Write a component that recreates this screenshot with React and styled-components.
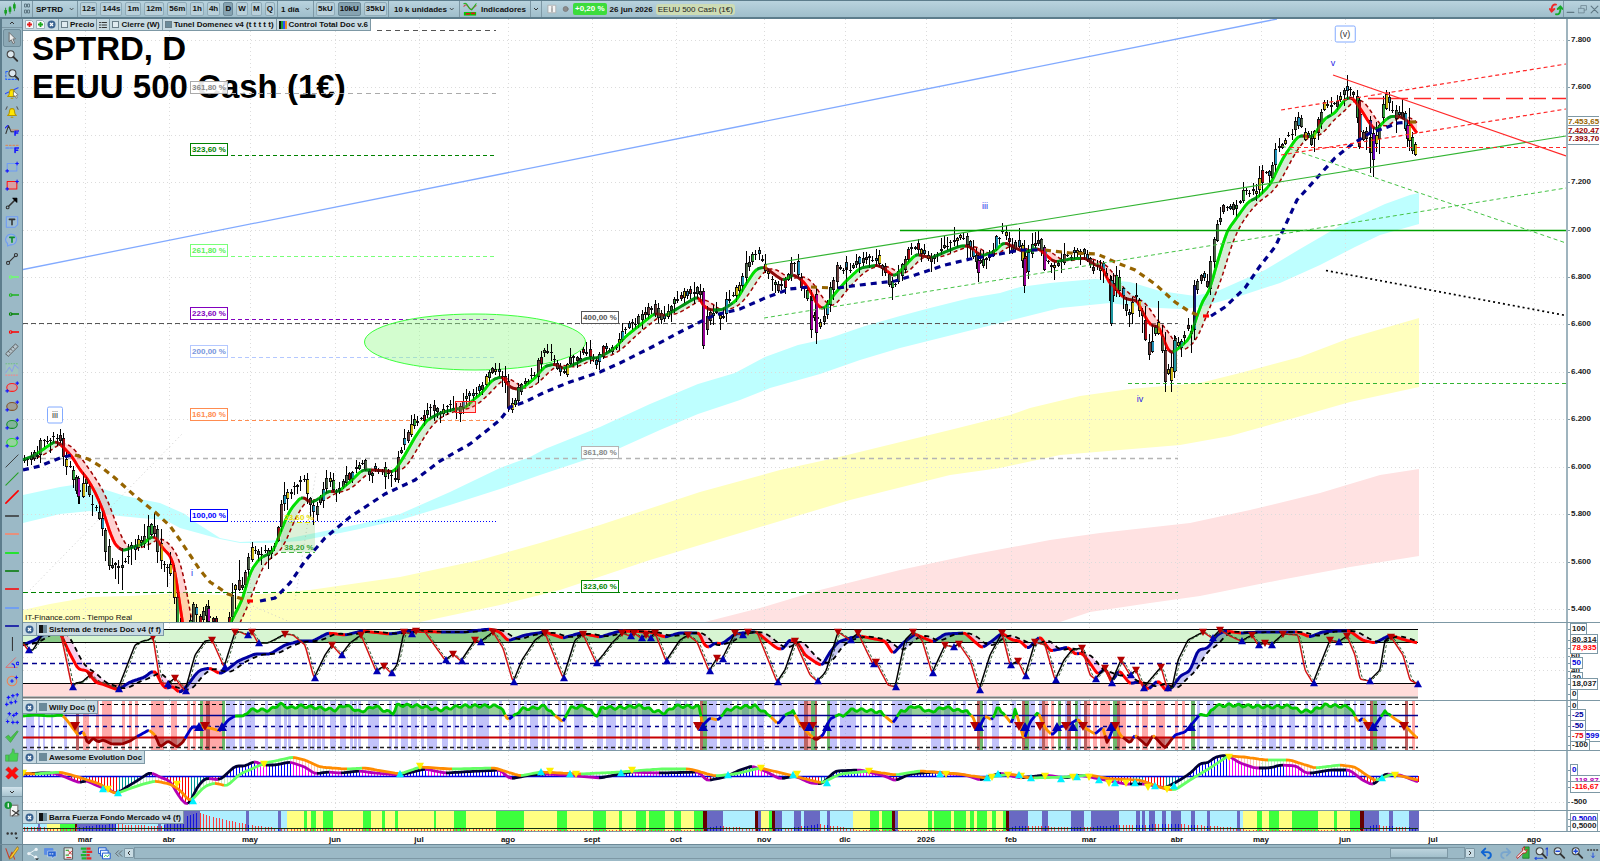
import React from 'react';
import styled, { createGlobalStyle } from 'styled-components';

const GlobalStyle = createGlobalStyle`
  *, *::before, *::after { box-sizing: border-box; }
  body { margin: 0; background: #9bb9c6; font-family: "Liberation Sans", Arial, sans-serif; font-size: 8px; color: #101010; }
  button, select, input { font: inherit; color: inherit; margin: 0; padding: 0; }
  svg { display: block; }
`;

/* ---------- numeric helpers ---------- */

const pts = (s) => s.trim().split(/\s+/).map((p) => p.split(',').map(Number));

const at = (p, x) => {
  if (x <= p[0][0]) return p[0][1];
  for (let i = 1; i < p.length; i += 1) {
    if (x <= p[i][0]) {
      const [x0, y0] = p[i - 1];
      const [x1, y1] = p[i];
      return y0 + ((y1 - y0) * (x - x0)) / (x1 - x0 || 1);
    }
  }
  return p[p.length - 1][1];
};

const resample = (p, spread, step = 3) => {
  const out = [];
  const last = p[p.length - 1][0];
  for (let x = p[0][0]; x <= last; x += step) {
    out.push([x, (at(p, x - spread) + at(p, x) * 2 + at(p, x + spread)) / 4]);
  }
  return out;
};

const lagged = (p, lag) =>
  p.map(([x]) => [x, (at(p, x - lag * 0.4) + at(p, x - lag) + at(p, x - lag * 1.6)) / 3]);

const toPath = (p) => 'M' + p.map(([x, y]) => `${x.toFixed(1)} ${y.toFixed(1)}`).join('L');

const colourRuns = (p, pick) => {
  const runs = [];
  for (let i = 1; i < p.length; i += 1) {
    const colour = pick(p[i - 1], p[i]);
    const last = runs[runs.length - 1];
    if (last && last.colour === colour) last.points.push(p[i]);
    else runs.push({ colour, points: [p[i - 1], p[i]] });
  }
  return runs;
};

const between = (a, b, keep) => {
  let d = '';
  for (let i = 1; i < a.length; i += 1) {
    if (keep(a[i][1], b[i][1])) {
      d += `M${a[i - 1][0]} ${a[i - 1][1].toFixed(1)}L${a[i][0]} ${a[i][1].toFixed(1)}L${b[i][0]} ${b[i][1].toFixed(1)}L${b[i - 1][0]} ${b[i - 1][1].toFixed(1)}Z`;
    }
  }
  return d;
};

const overLevel = (p, level, above) => {
  const clamp = (y) => (above ? Math.min(y, level) : Math.max(y, level));
  return toPath([[p[0][0], level], ...p.map(([x, y]) => [x, clamp(y)]), [p[p.length - 1][0], level]]) + 'Z';
};

const randomiser = (seed) => {
  let s = seed;
  return () => {
    s = (s * 1664525 + 1013904223) % 4294967296;
    return s / 4294967296;
  };
};

/* ---------- series ---------- */

const LEFT = 23;
const PLOT_W = 1543;
const LAST = 1418;
const TOP = 19;
const PRICE_H = 603;

const price = pts(`23,462 30,457 38,453 40,440 48,438 55,436 60,441 63,460 70,468 72,475 78,497 82,480 85,477 88,497 94,508 98,520 102,528 107,558 112,568 117,570 122,562 125,555 130,550 135,540 140,545 145,535 150,523 155,533 160,567 165,565 168,560 172,580 176,620 182,650 190,625 192,606 196,618 200,616 206,612 212,622 222,640 228,622 231,600 233,582 238,584 243,586 247,560 252,548 258,552 264,553 270,550 276,540 280,510 283,497 290,490 297,483 303,480 308,502 313,512 317,505 323,490 328,472 332,490 338,492 343,478 350,476 355,468 362,462 367,475 372,470 378,468 384,473 390,475 394,482 397,455 401,448 407,432 413,423 420,420 427,410 433,407 440,413 447,405 455,412 460,408 465,395 473,396 478,392 483,380 488,375 492,369 498,372 501,380 504,372 506,390 508,408 512,406 517,390 523,387 530,376 535,375 538,358 542,353 546,352 552,358 558,370 563,378 568,357 575,360 580,355 584,350 592,358 596,365 603,348 610,350 617,343 623,328 632,323 642,317 651,305 657,315 662,318 669,310 678,295 698,290 700,292 703,330 706,318 712,313 721,320 726,302 734,292 741,283 745,267 755,252 762,262 769,278 775,287 780,288 784,282 791,265 796,263 798,283 807,297 810,313 816,317 819,328 825,312 830,290 837,267 848,270 859,260 875,257 882,268 891,287 896,280 903,263 910,245 917,247 923,255 930,260 941,247 951,242 960,236 969,245 978,267 984,257 991,253 996,237 1003,233 1012,250 1016,237 1025,270 1029,247 1038,238 1044,260 1053,270 1057,265 1064,257 1079,250 1087,260 1094,270 1101,267 1107,280 1111,305 1114,273 1122,297 1127,313 1136,293 1142,320 1148,350 1151,343 1155,327 1161,343 1166,380 1170,377 1174,343 1179,343 1183,332 1192,327 1194,287 1201,272 1207,290 1212,250 1217,223 1223,207 1233,207 1238,203 1244,190 1257,193 1260,173 1270,175 1275,150 1286,137 1292,133 1297,117 1303,135 1312,143 1318,120 1323,105 1334,107 1342,92 1349,87 1355,100 1358,137 1366,132 1371,158 1375,140 1383,105 1386,99 1394,117 1403,117 1407,133 1414,153 1418,153`);

const average = resample(pts(`23,460 35,455 48,446 55,441 60,444 68,452 73,458 80,470 87,478 95,492 103,510 109,530 115,545 123,551 133,547 143,544 152,536 157,538 162,548 168,553 173,560 178,590 182,622 190,660 215,660 231,622 243,598 250,572 260,558 273,552 282,528 290,510 302,496 311,503 320,498 328,491 338,492 352,480 362,470 372,470 385,471 394,472 405,455 415,437 427,420 440,413 455,409 465,408 473,400 482,393 492,380 503,376 509,387 520,390 535,378 545,366 556,364 563,369 575,364 587,358 597,358 607,353 615,348 625,337 640,325 655,313 665,316 675,310 690,301 699,296 703,306 710,310 722,310 736,301 746,284 756,269 765,267 775,275 784,281 793,274 803,281 811,292 817,305 824,310 832,297 845,282 860,268 878,265 886,270 894,277 905,266 916,254 931,258 945,252 960,246 969,246 981,256 994,252 1004,242 1015,248 1025,252 1038,248 1046,255 1054,262 1070,259 1085,258 1095,265 1103,267 1108,282 1115,287 1122,297 1130,300 1137,300 1144,315 1151,326 1159,326 1165,343 1170,354 1179,348 1190,338 1198,313 1203,300 1209,292 1218,260 1227,231 1238,216 1248,202 1258,197 1270,185 1283,158 1298,136 1305,136 1313,137 1324,119 1335,113 1345,99 1352,97 1360,108 1370,124 1376,131 1385,120 1391,116 1402,117 1410,123 1418,135`), 3, 2);
const averageLag = lagged(average, 9);

const averageColour = ([x0, y0], [x1, y1]) => {
  const slope = (y1 - y0) / (x1 - x0);
  if (slope < -0.65) return '#00e000';
  if (slope < 0.02) return '#009414';
  return slope > 0.8 ? '#ff0000' : '#8c0a0a';
};

const baseline = [
  ['#00008c', '23,470 40,466 60,458 72,455'],
  ['#966400', '75,455 88,459 100,466 115,478 135,496 155,512 170,526 180,540 190,555 200,570 210,582 228,594 245,600'],
  ['#ff0000', '247,601 256,601'],
  ['#00008c', '260,601 275,598 290,583 305,561 325,538 350,517 385,494 400,487 415,480 440,461 470,444 500,420 510,407 525,402 545,392 570,382 600,372 620,363 650,348 680,332 700,322 715,315 740,309 765,298 790,289 808,287'],
  ['#966400', '811,287 833,288'],
  ['#00008c', '838,288 860,285 895,281 915,275 945,265 970,259 1000,254 1020,250 1042,250'],
  ['#966400', '1045,250 1070,253 1097,254 1115,262 1135,270 1155,284 1175,302 1190,312 1200,316'],
  ['#ff0000', '1203,316 1209,316'],
  ['#00008c', '1211,316 1225,307 1245,288 1260,266 1275,247 1285,226 1297,200 1315,180 1335,158 1351,145 1370,133 1385,128 1398,123 1408,122'],
  ['#966400', '1410,122 1418,122'],
];

const bands = [
  ['#ffe2e2', '705,622 760,608 820,590 900,570 970,555 1050,540 1100,533 1190,523 1250,510 1320,493 1380,475 1419,469 1419,556 1350,567 1280,580 1200,596 1150,603 1090,612 1060,622'],
  ['#ffffbe', '23,610 50,604 90,597 130,596 180,593 240,596 310,590 400,577 480,560 540,543 600,525 700,492 780,470 835,458 880,447 950,430 1010,415 1030,408 1080,396 1130,389 1200,383 1240,373 1300,357 1350,338 1419,318 1419,387 1350,402 1280,422 1230,436 1180,445 1120,450 1060,455 1000,468 950,475 850,500 750,530 650,560 560,590 500,605 420,622 23,622'],
  ['#beffff', '23,495 60,487 80,484 100,488 125,496 160,503 185,514 195,522 220,538 240,542 280,540 320,532 360,524 400,514 450,492 500,468 530,457 545,449 600,427 650,404 698,384 735,373 765,357 798,345 830,338 865,326 900,316 930,308 970,298 1000,293 1020,287 1050,283 1095,279 1130,282 1160,291 1195,296 1220,290 1265,270 1300,249 1350,220 1385,204 1410,195 1419,193 1419,224 1380,235 1355,247 1320,265 1280,283 1240,296 1200,307 1180,309 1140,307 1110,303 1060,308 1020,318 960,333 900,348 860,360 820,374 770,388 740,400 698,414 660,430 620,448 585,460 540,475 500,489 450,505 400,520 350,531 300,541 270,543 240,543 220,539 180,528 165,520 140,518 110,515 90,511 60,514 23,523'],
];

const months = [
  [85, 'mar'], [169, 'abr'], [250, 'may'], [335, 'jun'], [419, 'jul'], [508, 'ago'], [592, 'sept'], [676, 'oct'],
  [764, 'nov'], [845, 'dic'], [926, '2026'], [1011, 'feb'], [1089, 'mar'], [1177, 'abr'], [1261, 'may'],
  [1345, 'jun'], [1433, 'jul'], [1534, 'ago'],
];

const priceY = (v) => 229.5 + (7000 - v) * 0.2373;
const priceLevels = [7800, 7600, 7400, 7200, 7000, 6800, 6600, 6400, 6200, 6000, 5800, 5600, 5400];

const fibLeft = [
  [30, '#555', null, '5 4'], [93, '#aaa', '361,80 %', '5 4'], [155, '#008200', '323,60 %', '4 3'],
  [256, '#78ff78', '261,80 %', '4 3'], [319, '#8200be', '223,60 %', '4 3'], [357, '#b4c8ff', '200,00 %', '4 3'],
  [420, '#ff8c50', '161,80 %', '4 3'], [521, '#0000ff', '100,00 %', '1 2'],
];
const fibMid = [
  [323, '#555', '400,00 %'], [458, '#b4b4b4', '361,80 %'], [592, '#008200', '323,60 %'],
];
const fibText = { '#b4c8ff': '#7896dc', '#78ff78': '#5af05a', '#aaa': '#888', '#b4b4b4': '#888' };

const waves = [
  [55, 415, 'iii', true], [192, 573, 'i'], [985, 206, 'iii'], [1140, 399, 'iv'], [1333, 63, 'v'], [1345, 34, '(v)', true],
];

const bigCandles = [
  [78, 478, 497, 476, 504, '#aa00aa'], [208, 608, 622, 600, 622, '#aa00aa'], [703, 291, 346, 288, 349, '#960096'],
  [816, 294, 333, 288, 344, '#960096'], [811, 300, 330, 290, 338, '#960096'], [1024, 258, 286, 240, 293, '#960096'],
  [1044, 247, 270, 245, 271, '#960096'], [978, 260, 273, 255, 282, '#960096'], [1373, 133, 160, 128, 177, '#6400be'],
  [1370, 120, 134, 116, 173, '#1e1e8c'], [1359, 100, 147, 98, 149, '#8c0a14'], [1407, 125, 139, 120, 147, '#aa00aa'],
  [1194, 285, 325, 280, 340, '#14146e'], [1165, 350, 382, 345, 386, '#643c3c'], [1174, 340, 372, 335, 378, '#1e96a0'],
  [1111, 280, 324, 276, 326, '#1e96a0'], [846, 262, 268, 256, 290, '#1e82aa'],
];

const makeCandles = () => {
  const rnd = randomiser(77);
  const out = [];
  const palette = ['#1e8cb4', '#1e8cb4', '#c8b414', '#c8b414', '#a00a14', '#4b5f46', '#4b5f46', '#4b5f46', '#643c3c', '#2d9b37'];
  for (let x = 24; x <= LAST; x += 3.25) {
    const rough = (x > 80 && x < 240) || (x > 1100 && x < 1192) || x > 1358 ? 1.7 : 1;
    const open = at(price, x - 3.25) + (rnd() - 0.5) * 7 * rough;
    const close = at(price, x) + (rnd() - 0.5) * 7 * rough;
    const top = Math.min(open, close);
    const bottom = Math.max(open, close, top + 1);
    out.push({
      x: Math.round(x),
      top,
      bottom,
      high: top - rnd() * rnd() * 13 * rough - 1,
      low: bottom + rnd() * rnd() * 13 * rough + 1,
      colour: palette[Math.floor(rnd() * palette.length)],
    });
  }
  bigCandles.forEach(([x, top, bottom, high, low, colour]) => out.push({ x, top, bottom, high, low, colour }));
  return out;
};
const candles = makeCandles();

/* Sistema de trenes */
const trainSlow = resample(pts(`23,645 35,640 50,630 60,632 68,650 78,669 88,671 95,682 105,685 118,690 130,682 145,677 152,671 157,673 160,682 166,689 172,686 180,693 188,685 195,675 200,670 210,668 220,674 228,669 238,661 255,654 270,654 285,645 300,641 313,641 328,633 345,635 362,631 390,634 410,631 440,632 465,632 490,629 500,632 508,641 525,635 545,632 563,638 580,633 600,637 620,631 650,632 665,637 680,633 700,633 703,643 708,648 715,643 722,644 735,634 750,632 757,632 770,643 778,649 783,649 790,639 798,643 805,655 815,662 822,666 830,652 838,642 850,638 860,636 875,639 885,641 893,654 903,643 915,634 933,642 945,634 965,633 975,642 982,648 992,641 1002,633 1012,640 1020,641 1028,649 1040,636 1050,651 1060,649 1068,647 1075,654 1082,653 1090,663 1098,675 1105,668 1112,682 1119,670 1130,684 1140,681 1148,690 1158,680 1166,691 1172,688 1180,676 1190,671 1198,650 1208,648 1217,635 1225,631 1240,633 1260,632 1280,632 1298,632 1310,637 1322,632 1335,631 1350,631 1362,640 1375,643 1390,635 1405,640 1418,643`), 2, 2);
const trainSlowLag = lagged(trainSlow, 8);
const trainFastKeys = pts(`23,643 28,650 33,650 45,630 60,630 72,687 76,683 82,682 90,675 97,681 105,684 118,689 135,645 143,641 148,640 153,637 160,682 167,684 175,678 185,691 195,655 205,641 212,640 224,667 235,632 240,632 247,635 252,632 258,643 267,643 270,642 285,634 293,635 305,645 314,678 325,655 332,645 341,655 350,643 361,635 376,671 384,666 391,673 397,665 404,632 411,634 416,631 425,632 445,660 453,654 461,661 475,640 480,642 493,632 503,648 513,682 522,660 535,640 545,633 563,678 575,640 583,634 596,663 603,655 612,643 622,633 630,636 634,633 641,638 646,635 650,638 655,633 666,661 680,640 688,635 697,642 709,671 717,658 722,659 735,633 742,635 748,632 757,632 777,682 785,670 795,641 810,675 817,681 823,675 826,671 838,632 850,640 858,633 867,652 873,664 876,662 880,670 888,685 895,687 905,640 913,632 922,640 932,673 945,645 953,647 959,644 970,660 979,690 990,655 1002,633 1010,665 1018,661 1025,676 1035,642 1045,645 1055,680 1064,660 1072,650 1082,648 1090,675 1095,679 1105,668 1111,683 1121,660 1130,675 1136,670 1143,688 1150,680 1161,667 1167,688 1172,688 1178,660 1188,640 1203,632 1212,638 1220,630 1230,636 1241,641 1252,635 1258,645 1265,643 1271,645 1283,634 1298,635 1305,670 1313,683 1320,665 1330,640 1338,642 1347,636 1355,655 1360,679 1369,681 1380,670 1385,640 1391,637 1403,655 1410,680 1418,684`);
const trainFast = resample(trainFastKeys, 1, 1);
const trainFastLag = lagged(trainFast, 2);
const trainMarks = trainFastKeys.slice(1, -1).flatMap(([x, y], i) => {
  const before = trainFastKeys[i][1];
  const after = trainFastKeys[i + 2][1];
  if (y < before && y <= after) return [['down', x, y]];
  if (y > before && y >= after) return [['up', x + 1, y]];
  return [];
}).concat([['up', 1418, 684]]);

/* Willy */
const stripes = {
  'rgba(128,128,245,.48)': '26-34 38-40 43-45 51-53 64-67 226-235 239-242 245-255 265-268 275-281 284-287 288-291 298-304 308-311 312-315 317-321 322-325 330-336 340-346 350-353 354-357 358-361 368-379 389-392 395-398 401-408 411-417 421-424 427-437 442-448 453-456 460-463 467-473 476-489 499-502 509-515 518-521 524-527 530-538 542-545 547-550 558-561 564-567 574-583 597-603 606-616 620-623 626-632 635-638 642-650 662-668 675-681 684-687 690-693 707-717 720-732 737-739 742-749 751-754 757-764 772-775 779-794 798-804 830-837 840-856 860-862 872-875 879-882 892-912 931-941 944-950 953-956 963-966 984-987 992-999 1012-1016 1029-1035 1039-1042 1065-1067 1078-1081 1197-1200 1207-1214 1227-1230 1237-1243 1256-1259 1262-1266 1269-1276 1279-1282 1289-1295 1305-1308 1312-1318 1321-1324 1334-1337 1344-1350 1354-1356 1360-1366 1377-1386',
  'rgba(255,96,96,.55)': '83-89 96-99 102-112 122-125 129-132 135-138 151-164 171-177 187-190 193-196 203-222 808-811 1045-1048 1051-1054 1087-1090 1093-1097 1100-1110 1120-1126 1136-1139 1142-1148 1156-1165 1175-1178 1182-1185 1412-1415',
  'rgba(60,160,60,.75)': '200-203 222-225 703-707 811-815 827-830 980-983 1025-1029 1058-1061 1075-1078 1113-1117 1191-1195 1373-1377',
  'rgba(170,60,60,.8)': '76-79 206-210 700-703 804-808 815-817 977-980 1022-1025 1042-1045 1067-1071 1084-1087 1117-1120 1370-1373 1405-1408',
};
const willyBase = pts(`23,716 35,715 50,716 62,715 66,719 72,727 78,735 83,731 88,744 93,738 98,742 103,740 112,744 122,744 130,741 138,736 149,730 155,735 160,747 168,741 177,747 183,742 187,735 192,727 200,727 210,728 220,731 228,720 235,716 243,716 250,710 258,710 270,710 280,704 290,708 300,706 320,708 335,710 345,705 360,712 375,706 385,711 394,713 397,705 420,706 440,710 460,706 490,706 500,706 508,720 513,716 522,709 535,708 545,706 552,713 563,722 570,708 585,706 597,717 602,707 615,708 640,706 655,711 665,713 675,706 700,707 702,726 710,718 718,720 727,710 740,707 755,706 770,716 778,724 785,715 793,711 800,724 810,735 816,740 823,735 830,719 840,714 843,717 850,710 865,710 880,712 893,723 900,712 915,706 930,712 945,707 960,711 965,710 973,717 978,730 985,716 992,720 998,707 1012,724 1015,708 1024,740 1030,722 1038,712 1045,728 1052,735 1060,727 1070,724 1078,719 1085,728 1095,734 1103,727 1107,744 1115,723 1120,735 1130,743 1135,735 1147,746 1153,735 1165,748 1175,735 1185,732 1192,724 1200,714 1207,716 1215,706 1230,705 1250,706 1270,707 1290,706 1300,711 1312,711 1325,705 1350,707 1358,722 1363,718 1372,730 1385,711 1395,719 1405,725 1410,731 1417,738`);
const willy = resample(willyBase, 1, 2).map(([x, y], i) => [x, y + (x > 240 && y < 713 ? Math.sin(i * 1.3) * 1.4 : 0)]);
const willyColour = ([, y0], [, y1]) => {
  const mid = (y0 + y1) / 2;
  if (mid < 716.2) return '#00c800';
  if (mid > 737) return '#960000';
  return y1 > y0 ? '#ff9600' : '#0000c8';
};
const willyMarks = [
  ...[75, 205, 698, 804, 812, 975, 1019, 1040, 1066, 1083, 1115, 1368, 1404].map((x) => ['down', x, 726]),
  ...[199, 222, 703, 809, 827, 979, 1025, 1057, 1073, 1111, 1191, 1373].map((x) => ['up', x, 727]),
];

/* Awesome Evolution */
const awesomeFast = resample(pts(`23,774 40,773 55,773 80,783 85,780 100,787 110,790 117,794 125,788 140,779 150,772 160,777 170,781 180,798 187,806 192,800 195,790 205,778 220,780 235,766 245,766 255,761 262,765 275,765 290,762 305,767 315,774 327,772 340,773 360,771 375,773 400,775 425,769 445,773 480,771 500,770 510,779 530,775 545,774 565,775 600,778 630,772 660,773 700,772 706,781 725,777 740,770 752,766 765,771 780,779 795,776 810,783 822,784 835,771 860,770 885,776 895,781 910,774 935,772 965,775 980,780 1000,773 1020,778 1045,775 1065,778 1080,775 1100,779 1125,784 1145,784 1165,788 1180,780 1192,772 1200,763 1208,763 1215,757 1227,755 1240,763 1255,768 1270,768 1280,765 1297,766 1305,773 1312,773 1330,770 1350,770 1362,780 1373,785 1385,774 1400,775 1418,782`), 3, 3);
const awesomeSlow = resample(pts(`23,773 35,774 60,772 75,776 100,784 115,794 140,785 155,781 170,784 180,790 190,802 205,786 215,783 227,786 240,774 265,763 280,760 292,757 305,760 320,767 345,769 365,768 400,774 420,767 450,769 495,768 520,776 540,772 580,774 620,772 660,769 690,769 715,776 735,774 760,768 790,775 822,783 840,774 870,771 895,775 920,771 960,774 985,778 1010,774 1030,778 1065,777 1090,775 1110,779 1140,780 1165,789 1175,790 1190,780 1210,768 1228,756 1245,757 1265,760 1290,760 1315,768 1340,765 1355,767 1375,781 1392,774 1418,780`), 3, 3);
const awesomeMarks = [
  ...pts('23,773 108,789 177,784 264,764 420,766 550,771 576,774 632,770 761,768 797,774 869,771 946,774 992,777 1008,775 1021,776 1045,776 1073,777 1089,777 1109,783 1126,783 1148,787 1167,789 1229,757 1395,775').map(([x, y]) => ['down', x, y]),
  ...pts('103,789 118,793 193,801 400,774 541,772 570,774 621,773 728,775 793,775 827,783 940,774 987,778 998,774 1019,775 1031,778 1061,779 1077,777 1099,780 1115,783 1135,783 1155,786 1174,786 1382,778').map(([x, y]) => ['up', x, y]),
];

/* Barra Fuerza */
const forceColours = { L: '#aeeeff', Y: '#ffff82', G: '#3cff3c', P: '#6969c3', D: '#640000' };
const force = '23L 38P 40L 47Y 60G 75D 77P 116L 158P 161L 164P 200L 246P 249L 278P 281L 287Y 304G 307Y 311G 316Y 323G 333Y 363G 371Y 382G 385Y 395G 398Y 434G 436Y 454G 466Y 496G 524Y 557G 567Y 593G 606Y 619G 622Y 636G 646Y 649G 665Y 674G 681Y 694G 703D 707P 723L 755D 758P 761Y 769G 772D 775P 782L 794P 801L 804P 820L 827P 830L 853Y 870G 879Y 882G 892D 895P 898Y 928G 932Y 934G 951Y 954G 966Y 970G 974Y 977G 987Y 992G 996Y 1003G 1006D 1009P 1028L 1042P 1048L 1071P 1084L 1091P 1119L 1136P 1140L 1142P 1145L 1149P 1155L 1162P 1166L 1171P 1181L 1191P 1195L 1207P 1210L 1237P 1240L 1243Y 1257G 1262Y 1269G 1279Y 1292G 1318Y 1334G 1337Y 1350G 1360D 1364P 1379L 1389P 1393L 1409P'
  .split(' ').map((s) => [parseInt(s, 10), s.slice(-1)]);
const forceHeights = pts('23,4 70,3 110,7 160,5 180,12 198,19 203,17 225,11 250,6 285,2 700,1 715,5 750,3 790,3 818,7 850,3 855,1 1005,1 1015,5 1085,4 1119,6 1180,7 1240,3 1245,1 1360,1 1372,6 1418,3');

/* ---------- drawing pieces ---------- */

const Plot = styled.svg.attrs({ preserveAspectRatio: 'none', 'aria-hidden': true })`
  position: absolute;
  inset: 0;
  width: 100%;
  height: 100%;
`;

const Marks = ({ marks, size, up, down }) => (
  <g>
    {marks.map(([kind, x, y]) => (
      <path
        key={kind + x}
        fill={kind === 'up' ? up : down}
        d={kind === 'up'
          ? `M${x - size} ${y + size * 0.8}h${size * 2}L${x} ${y - size}Z`
          : `M${x - size} ${y - size * 0.8}h${size * 2}L${x} ${y + size}Z`}
      />
    ))}
  </g>
);

const Runs = ({ points, pick, width, dash }) => (
  <g fill="none" strokeWidth={width} strokeDasharray={dash} strokeLinejoin="round">
    {colourRuns(points, pick).map((r) => <path key={r.points[0][0]} d={toPath(r.points)} stroke={r.colour} />)}
  </g>
);

const Guide = ({ y, colour, dash, width = 1, from = LEFT, to = LAST }) => (
  <path d={`M${from} ${y + 0.5}H${to}`} stroke={colour} strokeWidth={width} strokeDasharray={dash} fill="none" />
);

const MonthGrid = ({ top, bottom }) => (
  <g stroke="#dcdcdc" strokeDasharray="1 3">
    {months.map(([x]) => <path key={x} d={`M${x + 0.5} ${top}V${bottom}`} />)}
  </g>
);

const PriceBackdrop = () => (
  <Plot viewBox={`${LEFT} ${TOP} ${PLOT_W} ${PRICE_H}`}>
    {bands.map(([colour, s]) => <path key={colour} fill={colour} d={`${toPath(pts(s))}Z`} />)}
    <MonthGrid top={TOP} bottom={622} />
    <g stroke="#dcdcdc" strokeDasharray="1 3">
      {priceLevels.map((v) => <path key={v} d={`M23 ${Math.round(priceY(v)) + 0.5}H1566`} />)}
      <path d="M30 590L182 434M220 592L290 622M295 600L316 473" stroke="#ccc" fill="none" />
    </g>
  </Plot>
);

const PricePlot = () => (
  <Plot viewBox={`${LEFT} ${TOP} ${PLOT_W} ${PRICE_H}`}>
    <path d="M23 269.5L1277 19" stroke="#82aaff" strokeWidth="1.3" />
    <Guide y={323} colour="#555" dash="5 3" to={1178} />
    <Guide y={458} colour="#b4b4b4" dash="5 4" to={1178} width={1.5} />
    <Guide y={592} colour="#008200" dash="5 3" to={1178} />
    {fibLeft.map(([y, colour, , dash]) => <Guide key={y} y={y} colour={colour} dash={dash} from={y === 30 ? 377 : 231} to={496} />)}
    <ellipse cx="475" cy="342" rx="110.5" ry="28" fill="rgba(150,250,140,.42)" stroke="#3cff3c" />
    <rect x="281" y="522" width="34" height="30" fill="rgba(120,200,100,.25)" />
    <Guide y={522} colour="#e6e600" dash="5 3" from={281} to={315} />
    <Guide y={552} colour="#46b446" dash="5 3" from={281} to={315} />
    <path d={between(average, averageLag, (a, b) => a < b)} fill="rgba(150,210,150,.4)" />
    <path d={between(average, averageLag, (a, b) => a > b)} fill="rgba(255,140,140,.4)" />
    <path d={toPath(averageLag)} fill="none" stroke="#a00000" strokeWidth="1.5" strokeDasharray="4 3" />
    <Runs points={average} pick={averageColour} width={2.8} />
    <g shapeRendering="crispEdges">
      {candles.map((c, i) => (
        <g key={i}>
          <path d={`M${c.x + 0.5} ${c.high}V${c.low}`} stroke="#000" />
          <rect x={c.x - 1} y={c.top} width="3" height={Math.max(c.bottom - c.top, 1)} fill="#101010" />
          <rect x={c.x} y={c.top + 1} width="1" height={Math.max(c.bottom - c.top - 2, 0)} fill={c.colour} />
          {c.bottom - c.top > 7 && <rect x={c.x} y={c.top + 1} width="2" height={c.bottom - c.top - 2} fill={c.colour} />}
        </g>
      ))}
    </g>
    <g opacity=".6"><Runs points={average} pick={averageColour} width={2.8} /></g>
    {baseline.map(([colour, s]) => (
      <path key={s} d={toPath(pts(s))} fill="none" stroke={colour} strokeWidth="3.2" strokeDasharray="6 5" />
    ))}
    <rect x="455.5" y="401.5" width="20" height="11" fill="rgba(255,80,80,.25)" stroke="#ff1e1e" />
    <g fill="none">
      <path d="M765 264.5L1566 136" stroke="#32b432" strokeWidth="1.2" />
      <path d="M900 230.5H1566" stroke="#00a000" strokeWidth="1.6" />
      <path d="M764 318L1566 188M1282 146L1566 243" stroke="#46c346" strokeDasharray="4 3" />
      <path d="M1128 383.5H1566" stroke="#32b432" strokeWidth="1.2" strokeDasharray="4 3" />
      <path d="M1333 75L1566 156" stroke="#ff2828" strokeWidth="1.2" />
      <path d="M1281 110L1566 64M1281 155L1566 109M1290 147.5H1566" stroke="#ff2828" strokeWidth="1.2" strokeDasharray="4 3" />
      <path d="M1368 98.5H1566" stroke="#ff2828" strokeWidth="1.3" strokeDasharray="17 6" />
      <path d="M1326 270.5L1566 315.5" stroke="#000" strokeWidth="1.7" strokeDasharray="2 3" />
    </g>
  </Plot>
);

const TrainPlot = () => (
  <Plot viewBox={`${LEFT} 623 ${PLOT_W} 77`}>
    <MonthGrid top={623} bottom={700} />
    <Guide y={657} colour="#dcdcdc" dash="1 3" to={1566} />
    <Guide y={670} colour="#dcdcdc" dash="1 3" to={1566} />
    <rect x="23" y="629" width="1395" height="13" fill="#d7f5d2" />
    <rect x="23" y="684" width="1395" height="12" fill="#ffdcda" />
    <path d={overLevel(trainSlow, 642.5, true)} fill="rgba(60,160,60,.5)" />
    <path d={overLevel(trainSlow, 683.5, false)} fill="rgba(200,60,60,.5)" />
    <path d={between(trainSlow, trainSlowLag, (a, b) => a < b)} fill="rgba(130,130,230,.45)" />
    <path d={between(trainSlow, trainSlowLag, (a, b) => a > b)} fill="rgba(240,150,220,.45)" />
    <Guide y={629} colour="#000" />
    <Guide y={642} colour="#000" />
    <Guide y={683} colour="#000" />
    <Guide y={663} colour="#00008c" dash="5 4" width={1.6} />
    <Guide y={697} colour="#787878" width={2} />
    <Runs points={trainSlow} pick={(a, b) => (b[1] > a[1] + 0.02 ? '#ff0000' : '#0000a0')} width={3} />
    <path d={toPath(trainSlowLag)} fill="none" stroke="#000" strokeWidth="1.8" strokeDasharray="5 4" />
    <Runs points={trainFast} pick={(a, b) => (b[1] > a[1] ? '#d21414' : '#000')} width={1.5} />
    <path d={toPath(trainFastLag)} fill="none" stroke="#1e461e" strokeWidth="0.9" strokeDasharray="3 2" />
    <Marks marks={trainMarks} size={4} up="#0000b4" down="#b40000" />
  </Plot>
);

const WillyPlot = () => (
  <Plot viewBox={`${LEFT} 701 ${PLOT_W} 49`}>
    <MonthGrid top={701} bottom={750} />
    {Object.entries(stripes).map(([colour, s]) => (
      <g key={colour} fill={colour}>
        {s.split(' ').map((r) => {
          const [a, b] = r.split('-').map(Number);
          return <rect key={a} x={a} y="701" width={b - a} height="49" />;
        })}
      </g>
    ))}
    <path d={overLevel(willy, 715.5, true)} fill="rgba(50,160,50,.5)" />
    <path d={overLevel(willy, 737, false)} fill="rgba(140,20,20,.5)" />
    <Guide y={704} colour="#000" dash="4 3" />
    <Guide y={747} colour="#222" dash="4 3" width={1.3} />
    <Guide y={726} colour="#00008c" dash="4 4" width={1.6} />
    <Guide y={715} colour="#00008c" width={1.4} />
    <Guide y={737} colour="#c80000" width={1.8} />
    <Runs points={willy} pick={willyColour} width={2.8} />
    <Marks marks={willyMarks} size={5} up="#0000b4" down="#b40000" />
  </Plot>
);

const AwesomePlot = () => (
  <Plot viewBox={`${LEFT} 751 ${PLOT_W} 59`}>
    <MonthGrid top={751} bottom={810} />
    <Guide y={802} colour="#dcdcdc" dash="1 3" to={1566} />
    <g shapeRendering="crispEdges">
      {awesomeFast.map(([x, y], i) => {
        const rising = i > 0 && y <= awesomeFast[i - 1][1];
        const upper = y < 776;
        const colour = upper ? (rising ? '#0000ff' : '#ff00ff') : rising ? '#009696' : '#ff0000';
        return (
          <g key={x}>
            <path d={`M${x + 0.5} ${y}V${at(awesomeSlow, x)}`} stroke={rising ? '#c8f0c8' : '#ffc8b4'} />
            <path d={`M${x + 0.5} 776V${y}`} stroke={colour} />
          </g>
        );
      })}
    </g>
    <Guide y={776} colour="#0000dc" width={1.5} />
    <Runs points={awesomeFast} pick={(a, b) => (b[1] > a[1] ? '#b400b4' : '#000032')} width={2.8} />
    <Runs points={awesomeSlow} pick={(a, b) => (b[1] > a[1] ? '#ff8c00' : '#64ff64')} width={2.8} />
    <Marks marks={awesomeMarks} size={4} up="#00f0ff" down="#fff000" />
  </Plot>
);

const ForcePlot = () => {
  const bars = [];
  for (let x = 24; x < LAST; x += 3.25) bars.push(Math.round(x));
  const regime = (x) => force.filter(([s]) => s <= x).pop()[1];
  return (
    <Plot viewBox={`${LEFT} 811 ${PLOT_W} 20`} shapeRendering="crispEdges">
      <MonthGrid top={811} bottom={831} />
      {force.map(([x, c], i) => (
        <rect key={x} x={x} y="811" width={(force[i + 1] ? force[i + 1][0] : 1419) - x} height="20" fill={forceColours[c]} />
      ))}
      {bars.map((x) => {
        const h = at(forceHeights, x);
        return <path key={x} d={`M${x + 0.5} 831v${-h}`} stroke={regime(x) === 'P' ? '#1414dc' : '#ff3c3c'} />;
      })}
      <Guide y={828} colour="#143214" />
    </Plot>
  );
};

/* ---------- layout ---------- */

const edge = '#7d98a5';

const Page = styled.div`
  display: flex;
  flex-direction: column;
  min-height: 100vh;
  overflow: hidden;
`;

const TopBar = styled.header`
  display: flex;
  align-items: center;
  height: 19px;
  flex: none;
  border-top: 1px solid #5d7d8c;
  border-bottom: 2px solid #5d7d8c;
  background: linear-gradient(#b9d3de, #9fbecb);
  font-weight: bold;
  white-space: nowrap;
`;

const Group = styled.div`
  display: flex;
  align-items: center;
  align-self: stretch;
  gap: ${(p) => p.$gap || 3}px;
  padding: 0 ${(p) => p.$pad || 3}px;
  width: ${(p) => (p.$w ? `${p.$w}px` : 'auto')};
  flex: none;
  border-right: ${(p) => (p.$open ? '0' : `1px solid ${edge}`)};
`;

const ToolButton = styled.button`
  height: 14px;
  padding: 0 1px;
  flex: 1 0 auto;
  border: 1px solid ${(p) => (p.$on ? '#6d8a98' : '#8fabb8')};
  border-radius: 2px;
  background: ${(p) => (p.$on ? '#86a3b1' : '#b9d0da')};
  line-height: 10px;
  font-weight: bold;
  cursor: pointer;
`;

const IconButton = styled.button`
  display: flex;
  align-items: center;
  justify-content: center;
  flex: none;
  width: ${(p) => p.$w || 18}px;
  height: ${(p) => p.$h || 14}px;
  border: 0;
  background: none;
  cursor: pointer;
`;

const Picker = styled.label`
  position: relative;
  display: flex;
  flex: 1;
  align-items: center;
`;

const Select = styled.select`
  appearance: none;
  width: 100%;
  border: 0;
  background: none;
  font-weight: bold;
  outline: none;
`;

const Spacer = styled.div`
  flex: 1;
`;

const Change = styled.output`
  padding: 0 2px;
  border-radius: 2px;
  background: #3cdc3c;
  color: #fff;
  line-height: 12px;
`;

const Instrument = styled.span`
  padding: 0 2px;
  border-radius: 3px;
  background: #cddcb4;
  color: #222;
  font-weight: normal;
  line-height: 11px;
`;

const Body = styled.div`
  display: flex;
  flex: 1;
  min-height: 0;
`;

const SideBar = styled.nav`
  display: flex;
  flex-direction: column;
  flex: none;
  width: 23px;
  border-left: 2px solid #5d7d8c;
  border-right: 1px solid #6d8997;
  background: #9bb9c6;
`;

const Handle = styled.button`
  display: flex;
  align-items: center;
  justify-content: center;
  height: ${(p) => p.$h || 9}px;
  flex: none;
  border: 0;
  border-bottom: 1px solid ${edge};
  background: ${(p) => (p.$lit ? 'linear-gradient(#d2e4ec,#a8c4d0)' : '#9bb9c6')};
`;

const ToolList = styled.div`
  display: flex;
  flex: 1 1 0;
  flex-direction: column;
  align-items: center;
  justify-content: space-between;
  min-height: 0;
  padding: 1px 0 5px;
  overflow: hidden;
`;

const SideTool = styled.button`
  display: flex;
  align-items: center;
  justify-content: center;
  flex: 0 0 18px;
  width: 18px;
  border: 1px solid ${(p) => (p.$on ? '#6f8d9b' : 'transparent')};
  border-radius: 2px;
  background: ${(p) => (p.$on ? '#8ba8b5' : 'none')};
`;

const SideFoot = styled.div`
  display: flex;
  flex-direction: column;
  align-items: center;
  justify-content: space-around;
  flex: none;
  height: 47px;
`;

const Workspace = styled.main`
  display: flex;
  flex: 1;
  flex-direction: column;
  min-width: 0;
  background: #fff;
`;

const Panel = styled.section`
  display: flex;
  flex: ${(p) => (p.$h ? 'none' : '1 1 auto')};
  height: ${(p) => (p.$h ? `${p.$h}px` : 'auto')};
  min-height: ${(p) => (p.$h ? 0 : 300)}px;
  border-top: ${(p) => (p.$h ? `1px solid ${edge}` : '0')};
`;

const Canvas = styled.div`
  position: relative;
  flex: 1;
  overflow: hidden;
`;

const Axis = styled.div`
  position: relative;
  flex: none;
  width: 34px;
  border-left: 2px solid #9fb4be;
  overflow: hidden;
  font-weight: bold;
`;

const Tick = styled.span`
  position: absolute;
  left: 3px;
  transform: translateY(-50%);
  color: ${(p) => p.$c || '#222'};
  line-height: 10px;
  white-space: nowrap;
  &::before {
    content: "";
    position: absolute;
    left: -4px;
    top: 5px;
    width: 3px;
    height: 1px;
    background: ${edge};
  }
`;

const TickBox = styled(Tick)`
  left: 2px;
  padding: 0 1px;
  border: 1px solid ${edge};
  background: #fff;
`;

const LastPrice = styled(TickBox)`
  left: 0;
  padding: 0;
  border-left: 0;
  border-right: 0;
`;

const Tabs = styled.div`
  position: absolute;
  top: 0;
  left: 0;
  display: flex;
  height: ${(p) => p.$h || 13}px;
  border-right: 1px solid ${edge};
  border-bottom: 1px solid ${edge};
  background: #c8dae2;
  font-weight: bold;
  white-space: nowrap;
`;

const Tab = styled.label`
  display: flex;
  align-items: center;
  gap: 2px;
  padding: 0 2px;
  & + & { border-left: 1px solid ${edge}; }
`;

const Toggle = styled.input.attrs({ type: 'checkbox' })`
  appearance: none;
  width: 7px;
  height: 7px;
  border: 1px solid #6b7f8a;
  background: ${(p) => p.$fill || '#dfeaf0'};
`;

const Title = styled.h1`
  position: absolute;
  top: 11px;
  left: 9px;
  margin: 0;
  color: #000;
  font-size: 33px;
  line-height: 38px;
`;

const FibTag = styled.span`
  position: absolute;
  transform: translateY(-100%);
  width: 38px;
  height: 13px;
  border: 1px solid ${(p) => p.$c};
  background: rgba(255, 255, 255, .9);
  color: ${(p) => p.$ink};
  font-weight: bold;
  line-height: 11px;
  text-align: center;
  white-space: nowrap;
`;

const ZoneTag = styled.span`
  position: absolute;
  transform: translate(-50%, -50%);
  color: ${(p) => p.$c};
  font-weight: bold;
  white-space: nowrap;
`;

const Wave = styled.span`
  position: absolute;
  transform: translate(-50%, -50%);
  min-width: ${(p) => (p.$boxed ? 14 : 0)}px;
  padding: ${(p) => (p.$boxed ? '3px 4px' : '0')};
  border: ${(p) => (p.$boxed ? '1px solid #82aaff' : '0')};
  border-radius: 2px;
  background: ${(p) => (p.$boxed ? '#fff' : 'none')};
  color: ${(p) => (p.$boxed ? '#333' : '#1e1ee6')};
  font-size: 9px;
  line-height: 9px;
  text-align: center;
`;

const Credit = styled.span`
  position: absolute;
  left: 2px;
  bottom: 0;
  line-height: 9px;
`;

const TimeRow = styled.div`
  display: flex;
  flex: none;
  height: 13px;
  border-top: 1px solid ${edge};
  padding-right: 34px;
  background: #fff;
`;

const TimeScale = styled.div`
  position: relative;
  flex: 1;
  font-weight: bold;
`;

const TimeLabel = styled.span`
  position: absolute;
  top: 3px;
  transform: translateX(-50%);
  line-height: 10px;
`;

const BottomBar = styled.footer`
  display: flex;
  align-items: center;
  flex: none;
  height: 17px;
  border-top: 1px solid #6d8997;
  background: #9bb9c6;
`;

const PenCell = styled.div`
  display: flex;
  align-items: center;
  justify-content: center;
  align-self: stretch;
  width: 23px;
  border-left: 2px solid #5d7d8c;
  border-right: 1px solid #6d8997;
  background: #8ca9b6;
`;

const ScrollButton = styled.button`
  display: flex;
  align-items: center;
  justify-content: center;
  flex: none;
  width: 10px;
  height: 10px;
  border: 1px solid #7d98a5;
  border-radius: 1px;
  background: #c8dce4;
`;

const Track = styled.div`
  display: flex;
  flex: 1;
  height: 12px;
  border: 1px solid ${edge};
  padding-right: 1%;
`;

const Thumb = styled.div`
  width: 58px;
  margin-left: auto;
  border: 1px solid ${edge};
  background: linear-gradient(#bcd3dd, #a3c0cc);
`;

const ViewTools = styled.div`
  display: flex;
  align-items: center;
  margin-left: 3px;
`;

/* ---------- icons ---------- */

const Ico = ({ s = 14, children }) => (
  <svg width={s} height={s} viewBox="0 0 16 16" fill="none" stroke="#333" strokeWidth="1.2" strokeLinecap="round" strokeLinejoin="round" aria-hidden="true">
    {children}
  </svg>
);

const Chevron = ({ up, side }) => (
  <svg width="6" height="6" viewBox="0 0 6 6" fill="none" stroke="#333" strokeWidth="1" aria-hidden="true">
    <path d={side === 'l' ? 'M4 1L2 3l2 2' : side === 'r' ? 'M2 1l2 2-2 2' : up ? 'M1 4l2-2 2 2' : 'M1 2l2 2 2-2'} />
  </svg>
);

const CloseDot = () => (
  <svg width="9" height="9" viewBox="0 0 9 9" aria-hidden="true">
    <circle cx="4.5" cy="4.5" r="4" fill="#3c6491" />
    <path d="M3 3l3 3M6 3l-3 3" stroke="#fff" strokeWidth="1.3" />
  </svg>
);

const Swatch = ({ colours }) => (
  <svg width="8" height="8" viewBox="0 0 8 8" shapeRendering="crispEdges" aria-hidden="true">
    {colours.map((c, i) => <rect key={c} x={(8 / colours.length) * i} width={8 / colours.length} height="8" fill={c} />)}
  </svg>
);

const PagePlus = ({ c }) => (
  <svg width="9" height="9" viewBox="0 0 9 9" aria-hidden="true">
    <path d="M.5.5h6l2 2v6h-8z" fill="#f5f8fa" stroke="#9db0ba" />
    <path d="M4.5 2v5M2 4.5h5" stroke={c} strokeWidth="1.8" />
  </svg>
);

const Plus = ({ x, y }) => <path d={`M${x - 1.5} ${y}h3M${x} ${y - 1.5}v3`} stroke="#1414ff" strokeWidth="1.3" />;
const lens = <><circle cx="6.5" cy="6" r="4" fill="#dce8ee" stroke="#444" /><path d="M9.5 9l4.5 4.5" strokeWidth="2.2" /></>;
const bell = <path d="M3 12c2-1 2-3 2.300-6C5.600 3.500 10.400 3.500 10.700 6c.3 3 .3 5 2.300 6zM7 14h2" fill="#ffe600" stroke="#b49600" />;
const ellipseTool = (c, f) => <><ellipse cx="8" cy="8.500" rx="6" ry="4.500" stroke={c} fill={f} /><Plus x={2.500} y={12.500} /><Plus x={14} y={3.500} /></>;
const rectTool = (c, f) => <><rect x="2.500" y="4" width="11" height="8.500" stroke={c} fill={f} /><Plus x={2.500} y={12.500} /><Plus x={13.800} y={4} /></>;
const ray = (c) => <><circle cx="6.500" cy="8" r="1.500" stroke={c} /><path d="M8 8h8" stroke={c} strokeWidth="1.800" /></>;
const diag = (c, w) => <path d="M1 15L15 1" stroke={c} strokeWidth={w || 1.3} />;
const flat = (c) => <path d="M.5 8h15" stroke={c} strokeWidth="1.600" />;

const sideTools = [
  ['Seleccionar', <path d="M5 2l7 7H9l2 4.500-2 .8L7.200 10 5 12z" fill="#eee" stroke="#666" strokeWidth="1" />],
  ['Zoom', lens],
  ['Zoom de área', <><path d="M1 4h5M1 4v9h12" stroke="#2864ff" strokeDasharray="2 2" /><g transform="translate(2)">{lens}</g></>],
  ['Alerta en línea', <><path d="M0 9l15-7" stroke="#2846ff" />{bell}<path d="M10 6l5 4-2 .5 1 3-1.500.5-1-3L10 12z" fill="#fff" stroke="#666" strokeWidth=".8" /></>],
  ['Alerta', <>{bell}<path d="M1 5l1.500-3M15 5l-1.500-3" stroke="#555" /></>],
  ['Fibonacci', <><path d="M1 12L4 3l3 7h3" /><path d="M0 6l3-3" stroke="#1414ff" /><path d="M11.500 14V9h4M11.500 11.500h3" stroke="#1414ff" strokeWidth="1.800" /><path d="M7 8h8" stroke="#d28c64" /></>],
  ['Proyección Fibonacci', <><path d="M1 5h14" stroke="#d28c64" strokeDasharray="2 2" /><path d="M1 8h10" stroke="#5078ff" strokeDasharray="3 1.500" /><path d="M11.500 13V8h4M11.500 10.500h3" stroke="#1414ff" strokeWidth="1.800" /></>],
  ['Rectángulo azul', rectTool('#6e9bf5', 'none')],
  ['Rectángulo rojo', rectTool('#ff1414', '#d8a0a4')],
  ['Flecha', <><circle cx="3" cy="13" r="1.600" /><path d="M4.500 11.500L12 4" strokeWidth="1.800" /><path d="M9 2.500h4.500V7z" fill="#000" stroke="#000" /></>],
  ['Texto', <><path d="M1.500 2h13v9l-3 3h-10z" stroke="#6e9bf5" fill="#a0bed2" /><path d="M5 5h6M8 5v6" strokeWidth="1.800" /></>],
  ['Comentario', <><path d="M8 1.500a6 6 0 11-2 12L3 15v-3A6 6 0 018 1.500z" stroke="#6e9bf5" fill="#a0bed2" /><path d="M5.500 5h5M8 5v5.500" stroke="#0a8c28" strokeWidth="1.800" /></>],
  ['Segmento', <><circle cx="3.500" cy="12.500" r="1.800" /><circle cx="12.500" cy="3.500" r="1.800" /><path d="M5 11l6-6" /></>],
  ['Semirrecta verde claro', ray('#6eff6e')], ['Semirrecta verde', ray('#1eb41e')], ['Semirrecta verde oscuro', ray('#008200')], ['Semirrecta roja', ray('#ff0000')],
  ['Regla', <path d="M1 12L12 1l3 3L4 15zM4 9.500l1.500 1.500M6.500 7L8 8.500M9 4.500L10.500 6" stroke="#555" strokeWidth="1" fill="#b4c4cc" />],
  ['Patrón', <><path d="M1 2h14v12H1z" fill="#a0c3be" stroke="none" /><path d="M1 2h14" stroke="#6ebe82" strokeDasharray="1 2" /><path d="M1 12l4-6 3 5 3-8 4 4" stroke="#8ca0e6" /><path d="M1 15h14" stroke="#f08c8c" strokeDasharray="1 2" /></>],
  ['Elipse roja', ellipseTool('#ff1e1e', '#c0a4a8')], ['Elipse marrón', ellipseTool('#82552d', '#a0a098')],
  ['Elipse verde', ellipseTool('#148c28', '#82b49b')], ['Elipse lima', ellipseTool('#28dc28', '#96d2a0')],
  ['Recta negra', diag('#333', 1)], ['Recta verde', diag('#28a028')], ['Recta roja', diag('#ff0000', 1.8)],
  ['Horizontal negra', flat('#333')], ['Horizontal salmón', flat('#ff8264')], ['Horizontal lima', flat('#00f000')],
  ['Horizontal verde', flat('#007800')], ['Horizontal roja', flat('#ff0000')], ['Horizontal celeste', flat('#6496ff')], ['Horizontal marina', flat('#0000a0')],
  ['Vertical', <path d="M8.500 0v16" stroke="#333" />],
  ['Ángulo', <><path d="M12 2L1 13h13" stroke="#e66464" strokeWidth="1" /><path d="M8 9c2 0 3 1.500 3 4M13 8.500a1.500 1.500 0 103 0 1.500 1.500 0 10-3 0" stroke="#1414ff" /></>],
  ['Círculo', <><circle cx="8" cy="8" r="5.500" stroke="#f08250" /><Plus x={8} y={8} /><Plus x={13} y={4} /></>],
  ['Ondas 5', <><path d="M1 14l2-9 3 6 3-8 3 7 2-7" stroke="#6482dc" strokeWidth=".8" strokeDasharray="1 1" /><Plus x={2} y={13} /><Plus x={4} y={5} /><Plus x={7} y={11} /><Plus x={9} y={3} /><Plus x={12} y={10} /><Plus x={14} y={2} /></>],
  ['Ondas abc', <><path d="M1 10l5-6 4 9" stroke="#6482dc" strokeWidth=".8" strokeDasharray="1 1" /><Plus x={3} y={12} /><Plus x={5} y={3} /><Plus x={10} y={5} /><Plus x={13} y={3} /><Plus x={9} y={13} /><Plus x={14} y={13} /></>],
  ['Correcto', <path d="M1 9l3-2 2.500 3L14 2l1 1-8.500 12z" fill="#46c846" stroke="#3c9646" strokeWidth=".8" />],
  ['Me gusta', <path d="M1 8h3.500v7H1zM5 8l3-3 .5-4c2 0 2.500 1 2 5h4.500l-1 9H5z" fill="#46d250" stroke="#46a050" strokeWidth=".8" />],
  ['Incorrecto', <path d="M1 4l3-3 4 4 4-4 3 3-4 4 4 4-3 3-4-4-4 4-3-3 4-4z" fill="#ff0a0a" stroke="#d21414" strokeWidth=".6" />],
];

const magnifier = (sign) => <>{lens}<path d={sign} stroke="#1e46dc" strokeWidth="1.500" /></>;

const footTools = [
  ['Compartir', <><path d="M12 3L4 8l8 5" stroke="#eef4f7" /><circle cx="12.500" cy="3" r="2" fill="#eef4f7" stroke="none" /><circle cx="3.500" cy="8" r="2" fill="#eef4f7" stroke="none" /><circle cx="12" cy="12.500" r="2" fill="#eef4f7" stroke="none" /><path d="M11 14h5l-2.500 2z" fill="#111" stroke="none" /></>],
  ['Mensajes', <><path d="M1 2h10v7H1z" fill="#5a8ce6" stroke="#5a8ce6" /><path d="M5 5h10v7h-3l-2 3v-3H5z" fill="#2864d2" stroke="#c8dcf0" strokeWidth=".8" /><path d="M7 8.500h6" stroke="#fff" strokeDasharray="1 2" /></>],
  ['Órdenes', <><path d="M3 1h10v14H3z" fill="#eee" stroke="#555" /><path d="M5 4h3M5 10h3" stroke="#00a000" /><path d="M8 5l4 4M12 5L8 9M6 13h5" stroke="#d22828" /></>],
  ['Libro de órdenes', <><path d="M1 2h7M3 6h5M1 10h7M2 14h6" stroke="#1eb432" strokeWidth="3" strokeLinecap="butt" /><path d="M8 2h5M8 6h7M8 10h4M8 14h6" stroke="#e62828" strokeWidth="3" strokeLinecap="butt" /></>],
  ['Ventanas', <><path d="M1 1h9v7H1z" fill="#eaf4ff" stroke="#1e5ad2" /><path d="M3.500 4h9v7h-9z" fill="#eaf4ff" stroke="#1e5ad2" /><path d="M6 7.500h9v7H6z" fill="#fff" stroke="#1e5ad2" /><path d="M7.500 12l2-2 2 2 2-2.500" stroke="#1eb432" strokeWidth="1" /></>],
];

const viewTools = [
  ['Deshacer', <path d="M6 3L2 7l4 4M2.500 7h6c5 0 5 6 1 7" stroke="#0f64d2" strokeWidth="2.200" />],
  ['Rehacer', <path d="M10 3l4 4-4 4M13.500 7h-6c-5 0-5 6-1 7" stroke="#78a5cd" strokeWidth="2" />],
  ['Ajustes', <><path d="M9 1h6v13H8z" fill="#32b43c" stroke="#146e1e" strokeWidth=".8" /><path d="M1 12l7-7-1-2 3-2-1 3 2 1 2-1-2 4H8l-6 6z" fill="#eee" stroke="#c81e1e" strokeWidth="1" /></>],
  ['Ajustar vista', <>{lens}<path d="M15 2v9M13.500 3.500L15 2l1 1.500M1 14h9M2.500 13L1 14l1.500 1.500" stroke="#1e46dc" strokeWidth="1.200" /></>],
  ['Alejar', magnifier('M4.500 6h4')],
  ['Acercar', magnifier('M4.500 6h4M6.500 4v4')],
];

/* ---------- page ---------- */

const left = (x) => `${((x - LEFT) / PLOT_W) * 100}%`;
const down = (y, top, h) => `${((y - top) / h) * 100}%`;

const Dropdown = ({ label, value }) => (
  <Picker>
    <Select aria-label={label} defaultValue={value}><option>{value}</option></Select>
    <Chevron />
  </Picker>
);

const frames = ['12s', '144s', '1m', '12m', '56m', '1h', '4h', 'D', 'W', 'M', 'Q'];

const Toolbar = () => (
  <TopBar>
    <Group $w={22}>
      <Ico><path d="M3 7v8M8 5v8M13 1v9" stroke="#148c1e" strokeWidth="1" /><path d="M3 9v4M8 6v5M13 2.500v5" stroke="#14a01e" strokeWidth="3" strokeLinecap="butt" /></Ico>
    </Group>
    <Group $w={11} $pad={2}>
      <svg width="6" height="12" viewBox="0 0 6 12" fill="none" stroke="#5f7884" aria-hidden="true"><path d="M.5 1h2v3h-2zM3.500 1h2v3h-2zM.5 7h2v3h-2zM3.500 7h2v3h-2z" /></svg>
    </Group>
    <Group $w={45}><Dropdown label="Valor" value="SPTRD" /></Group>
    <Group $w={200} $pad={2}>
      {frames.map((f) => <ToolButton key={f} $on={f === 'D'}>{f}</ToolButton>)}
    </Group>
    <Group $w={36}><Dropdown label="Periodo" value="1 día" /></Group>
    <Group $w={75} $pad={2}>
      {['5kU', '10kU', '35kU'].map((f) => <ToolButton key={f} $on={f === '10kU'}>{f}</ToolButton>)}
    </Group>
    <Group $w={71} $pad={5}><Dropdown label="Unidades" value="10 k unidades" /></Group>
    <Group $w={71} $gap={4}>
      <Ico><path d="M1 5c4-6 6 6 9 3l5-4" stroke="#c85050" /><path d="M1 2c4-3 5 7 9 7l5-7" stroke="#1eb41e" /><path d="M1 13.500h14" stroke="#00c800" strokeWidth="4" strokeLinecap="butt" /><path d="M4 13.500h3M10 13h3" stroke="#e61414" strokeWidth="2" /></Ico>
      Indicadores
    </Group>
    <Group $w={11} $pad={2}><IconButton $w={6} aria-label="Más indicadores"><Chevron /></IconButton></Group>
    <Group $gap={3} $pad={5} $open>
      <Ico s={10}><path d="M2 2h12v12H2z" fill="#f5f5f5" stroke="#aaa" /><path d="M8 4v1M8 7v5" strokeWidth="2" stroke="#888" /></Ico>
      <Ico s={10}><circle cx="9" cy="8" r="4" fill="#8c8c8c" stroke="#777" /></Ico>
      <Change>+0,20 %</Change>
      <span>26 jun 2026</span>
      <Instrument>EEUU 500 Cash (1€)</Instrument>
    </Group>
    <Spacer />
    <Group $w={17} $pad={1}>
      <IconButton $w={15} aria-label="Actualizar">
        <Ico><path d="M8 3C4 2 3 6 3 9M1 8l2 3 3-3" stroke="#f02828" strokeWidth="2.200" /><path d="M8 14c4 1 5-3 5-6M10 8l3-3 2.500 3" stroke="#14aa28" strokeWidth="2.200" /></Ico>
      </IconButton>
    </Group>
    <IconButton $w={12} aria-label="Minimizar"><Ico s={9}><path d="M2 13h12" stroke="#5f7884" strokeWidth="2" /></Ico></IconButton>
    <IconButton $w={12} aria-label="Restaurar"><Ico s={9}><path d="M5 5V1h10v8h-4M1 6h10v8H1z" stroke="#5f7884" /></Ico></IconButton>
    <IconButton $w={12} aria-label="Cerrar"><Ico s={9}><path d="M2 2l12 12M14 2L2 14" stroke="#5f7884" strokeWidth="2" /></Ico></IconButton>
  </TopBar>
);

const Indicator = ({ title, height, top, plot, swatch, ticks }) => (
  <Panel $h={height}>
    <Canvas>
      {plot}
      <Tabs>
        <Tab as="span"><CloseDot /></Tab>
        <Tab as="span"><Swatch colours={swatch} />{title}</Tab>
      </Tabs>
    </Canvas>
    <Axis>
      {ticks.map(([y, text, boxed, c], i) => {
        const Mark = boxed ? TickBox : Tick;
        return <Mark key={i} $c={c} style={{ top: down(y, top, height - 1) }}>{text}</Mark>;
      })}
    </Axis>
  </Panel>
);

export default function App() {
  return (
    <Page>
      <GlobalStyle />
      <Toolbar />
      <Body>
        <SideBar aria-label="Herramientas de dibujo">
          <Handle aria-label="Subir"><Chevron up /></Handle>
          <ToolList>
            {sideTools.map(([name, icon], i) => (
              <SideTool key={name} $on={i === 0} aria-label={name}><Ico s={14}>{icon}</Ico></SideTool>
            ))}
          </ToolList>
          <Handle $h={10} $lit aria-label="Bajar"><Chevron /></Handle>
          <SideFoot>
            <IconButton $h={18} aria-label="Copiar objetos">
              <Ico s={17}><path d="M6 4h7v10H6z" fill="#f5f5f5" stroke="#888" /><circle cx="4" cy="4" r="3.500" fill="#149632" stroke="none" /><path d="M4 2.500v3" stroke="#fff" /><path d="M8 9l6 4M14 9l-6 5" stroke="#444" /></Ico>
            </IconButton>
            <IconButton aria-label="Más">
              <Ico s={13}><path d="M2 8h.1M7 8h.1M12 8h.1" strokeWidth="3" /><path d="M11 13h4l-2 2z" fill="#111" stroke="none" /></Ico>
            </IconButton>
          </SideFoot>
        </SideBar>
        <Workspace>
          <Panel>
            <Canvas>
              <PriceBackdrop />
              <Title>SPTRD, D<br />EEUU 500 Cash (1€)</Title>
              <PricePlot />
              {fibLeft.filter((f) => f[2]).map(([y, c, text]) => (
                <FibTag key={y} $c={c} $ink={fibText[c] || c} style={{ left: left(190), top: down(y + 1, TOP, PRICE_H) }}>{text}</FibTag>
              ))}
              {fibMid.map(([y, c, text]) => (
                <FibTag key={y} $c={c} $ink={fibText[c] || c} style={{ left: left(581), top: down(y + 1, TOP, PRICE_H) }}>{text}</FibTag>
              ))}
              <ZoneTag $c="#e6dc00" style={{ left: left(299), top: down(517, TOP, PRICE_H) }}>23,60 %</ZoneTag>
              <ZoneTag $c="#32a032" style={{ left: left(299), top: down(547, TOP, PRICE_H) }}>38,20 %</ZoneTag>
              {waves.map(([x, y, text, boxed]) => (
                <Wave key={text + x} $boxed={boxed} style={{ left: left(x), top: down(y, TOP, PRICE_H) }}>{text}</Wave>
              ))}
              <Credit>IT-Finance.com - Tiempo Real</Credit>
              <Tabs $h={12}>
                <Tab as="span"><PagePlus c="#e61e1e" /><PagePlus c="#1eaa1e" /><CloseDot /></Tab>
                <Tab><Toggle />Precio</Tab>
                <Tab as="span"><Ico s={8}><path d="M1 3h2M1 8h2M1 13h2M6 3h9M6 8h9M6 13h9" strokeWidth="2" /></Ico></Tab>
                <Tab><Toggle />Cierre (W)</Tab>
                <Tab><Toggle $fill="#6b8a99" />Tunel Domenec v4 (t t t t t)</Tab>
                <Tab as="span"><Swatch colours={['#111', '#1ea03c', '#2850ff', '#e68c28']} />Control Total Doc v.6</Tab>
              </Tabs>
            </Canvas>
            <Axis>
              {priceLevels.filter((v) => v !== 7400).map((v) => (
                <Tick key={v} style={{ top: down(priceY(v), TOP, PRICE_H) }}>{`${Math.floor(v / 1000)}.${String(v % 1000).padStart(3, '0')}`}</Tick>
              ))}
              <LastPrice $c="#966400" style={{ top: down(122, TOP, PRICE_H) }}>7.453,65</LastPrice>
              <LastPrice $c="#a00000" style={{ top: down(131, TOP, PRICE_H) }}>7.420,47</LastPrice>
              <LastPrice $c="#8c0000" style={{ top: down(139, TOP, PRICE_H) }}>7.393,70</LastPrice>
            </Axis>
          </Panel>
          <Indicator
            title="Sistema de trenes Doc v4 (f f)" height={78} top={623} plot={<TrainPlot />} swatch={['#111', '#6b8a99']}
            ticks={[[656, '60'], [671, '40'], [678, '20', true], [640, '80,314', true], [629, '100', true], [648, '78,935', true, '#ff0000'], [663, '50', true, '#0000dc'], [694, '0', true], [684, '18,037', true]]}
          />
          <Indicator
            title="Willy Doc (t)" height={50} top={701} plot={<WillyPlot />} swatch={['#6b8a99']}
            ticks={[[706, '0', true], [736, '-75,599', true, '#0000dc'], [745, '-100', true], [715, '-25', true, '#0000a0'], [726, '-50', true, '#0000a0'], [736, '-75', true, '#e60000']]}
          />
          <Indicator
            title="Awesome Evolution Doc" height={60} top={751} plot={<AwesomePlot />} swatch={['#6b8a99']}
            ticks={[[770, '0', true, '#0000dc'], [781, '-118,87', true, '#b400b4'], [787, '-116,67', true, '#ff0000'], [802, '-500']]}
          />
          <Indicator
            title="Barra Fuerza Fondo Mercado v4 (f)" height={21} top={811} plot={<ForcePlot />} swatch={['#111', '#6b8a99']}
            ticks={[[819, '0,5000', true, '#0000dc'], [826, '0,5000', true]]}
          />
          <TimeRow>
            <TimeScale>
              {months.map(([x, name]) => <TimeLabel key={x} style={{ left: left(x) }}>{name}</TimeLabel>)}
            </TimeScale>
          </TimeRow>
        </Workspace>
      </Body>
      <BottomBar>
        <PenCell>
          <IconButton aria-label="Dibujar">
            <Ico><path d="M1 3l4 11L8 7l3 8" stroke="#c83c28" /><path d="M14 1L6 12l-1 3 3-1.500L15.500 3z" fill="#ffc828" stroke="#966e14" strokeWidth=".8" /></Ico>
          </IconButton>
        </PenCell>
        {footTools.map(([name, icon]) => <IconButton key={name} aria-label={name}><Ico s={13}>{icon}</Ico></IconButton>)}
        <IconButton $w={11} aria-label="Contraer"><Ico s={9}><path d="M8 3L3 8l5 5M14 3L9 8l5 5" stroke="#444" /></Ico></IconButton>
        <ScrollButton aria-label="Desplazar a la izquierda"><Chevron side="l" /></ScrollButton>
        <Track><Thumb /></Track>
        <ScrollButton aria-label="Desplazar a la derecha"><Chevron side="r" /></ScrollButton>
        <ViewTools>
          {viewTools.map(([name, icon]) => <IconButton key={name} aria-label={name}><Ico>{icon}</Ico></IconButton>)}
          <IconButton $w={14} aria-label="Opciones de vista"><Ico s={12}><path d="M1 4h14" strokeDasharray="1 3" strokeWidth="2" /><path d="M8 8v6M6 12l2 2 2-2" stroke="#1e46dc" /></Ico></IconButton>
        </ViewTools>
      </BottomBar>
    </Page>
  );
}
